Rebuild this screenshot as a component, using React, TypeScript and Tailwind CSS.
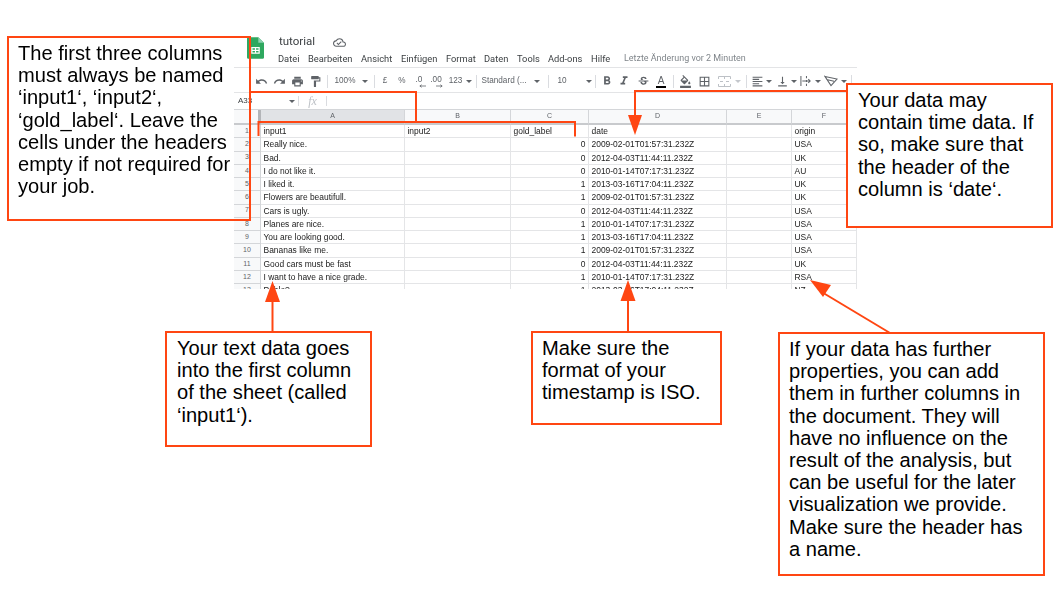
import {
  MdUndo,
  MdRedo,
  MdPrint,
  MdFormatPaint,
  MdFormatBold,
  MdFormatItalic,
  MdStrikethroughS,
  MdFormatColorFill,
  MdBorderAll,
  MdFormatAlignLeft,
  MdVerticalAlignBottom,
  MdOutlineCloudDone,
} from "react-icons/md";
import type { ReactNode } from "react";

const ORANGE = "#ff4612";

const rows = [
  ["Really nice.", "0", "2009-02-01T01:57:31.232Z", "USA"],
  ["Bad.", "0", "2012-04-03T11:44:11.232Z", "UK"],
  ["I do not like it.", "0", "2010-01-14T07:17:31.232Z", "AU"],
  ["I liked it.", "1", "2013-03-16T17:04:11.232Z", "UK"],
  ["Flowers are beautifull.", "1", "2009-02-01T01:57:31.232Z", "UK"],
  ["Cars is ugly.", "0", "2012-04-03T11:44:11.232Z", "USA"],
  ["Planes are nice.", "1", "2010-01-14T07:17:31.232Z", "USA"],
  ["You are looking good.", "1", "2013-03-16T17:04:11.232Z", "USA"],
  ["Bananas like me.", "1", "2009-02-01T01:57:31.232Z", "USA"],
  ["Good cars must be fast", "0", "2012-04-03T11:44:11.232Z", "UK"],
  ["I want to have a nice grade.", "1", "2010-01-14T07:17:31.232Z", "RSA"],
  ["Pablo?", "1", "2013-03-16T17:04:11.232Z", "NZ"],
];

const menu = [
  { label: "Datei", w: "w-[30px]" },
  { label: "Bearbeiten", w: "w-[53px]" },
  { label: "Ansicht", w: "w-[40px]" },
  { label: "Einfügen", w: "w-[45px]" },
  { label: "Format", w: "w-[38px]" },
  { label: "Daten", w: "w-[33px]" },
  { label: "Tools", w: "w-[31px]" },
  { label: "Add-ons", w: "w-[43px]" },
  { label: "Hilfe", w: "w-[33px]" },
];

const Caret = () => (
  <span className="inline-block h-0 w-0 border-x-[3px] border-t-[3px] border-x-transparent border-t-[#5f6368]" />
);

const Sep = () => <div className="mx-[3px] h-[13px] w-px shrink-0 bg-[#dadce0]" />;

const Tool = ({ w, children }: { w: string; children: ReactNode }) => (
  <div className={`flex shrink-0 items-center justify-center ${w}`}>{children}</div>
);

// ".0" / ".00" with the small arrow under the digits
const Decimal = ({ label, flip }: { label: string; flip?: boolean }) => (
  <div className="relative -mt-[2px] leading-[8px]">
    {label}
    <svg width="7" height="4" viewBox="0 0 8 4" className={`absolute top-[8px] ${flip ? "right-[-1px]" : "left-[3px] -scale-x-100"}`}>
      <path d="M0 2H7M5 0.500L7 2L5 3.500" fill="none" stroke="#5f6368" strokeWidth="0.9" />
    </svg>
  </div>
);

const MergeIcon = () => (
  <svg width="13" height="11" viewBox="0 0 13 11" fill="none" stroke="#bdc1c6" strokeWidth="1">
    <path d="M0.500 3V0.500H12.500V3M0.500 8V10.500H12.500V8M6.500 0.500V3M6.500 8V10.500" />
    <path d="M2 5.500H5M8 5.500H11" />
  </svg>
);

const WrapIcon = () => (
  <svg width="12" height="12" viewBox="0 0 13 12" fill="none" stroke="#5f6368" strokeWidth="1.100">
    <path d="M1 0.500V11.500M7 0.500V3M7 5V7M7 9V11.500M2.500 6H11M9 4L11 6L9 8" />
  </svg>
);

const RotateIcon = () => (
  <svg width="14" height="12" viewBox="0 0 14 12" fill="none" stroke="#5f6368" strokeWidth="1.100">
    <path d="M1 1.500L13 4L7 10.500Z M2.500 4.500L10 6.200M1 1L0.500 1.500" />
  </svg>
);

const Toolbar = () => (
  <div className="flex h-[24px] items-center pt-[2px] pl-[18px] text-[8.2px] text-[#5f6368]">
    <Tool w="w-[18px]"><MdUndo size={13} /></Tool>
    <Tool w="w-[18px]"><MdRedo size={13} /></Tool>
    <Tool w="w-[18px]"><MdPrint size={13} /></Tool>
    <Tool w="w-[18px]"><MdFormatPaint size={13} /></Tool>
    <Sep />
    <Tool w="w-[28px]">100%</Tool>
    <Tool w="w-[12px]"><Caret /></Tool>
    <Sep />
    <Tool w="w-[14px]">£</Tool>
    <Tool w="w-[20px]">%</Tool>
    <Tool w="w-[14px]"><Decimal label=".0" /></Tool>
    <Tool w="w-[20px]"><Decimal label=".00" flip /></Tool>
    <Tool w="w-[19px]">123</Tool>
    <Tool w="w-[8px]"><Caret /></Tool>
    <Sep />
    <Tool w="w-[48px]"><span className="whitespace-nowrap">Standard (...</span></Tool>
    <Tool w="w-[17px]"><Caret /></Tool>
    <Sep />
    <Tool w="w-[20px]">10</Tool>
    <div className="flex w-[20px] shrink-0 justify-end"><Caret /></div>
    <Sep />
    <Tool w="w-[15px]"><MdFormatBold size={14} /></Tool>
    <Tool w="w-[20px]"><MdFormatItalic size={14} /></Tool>
    <Tool w="w-[18px]"><MdStrikethroughS size={13} /></Tool>
    <Tool w="w-[18px]">
      <span className="border-b-[2px] border-black px-[2px] text-[10px] leading-[11px]">A</span>
    </Tool>
    <Sep />
    <Tool w="w-[16px]"><MdFormatColorFill size={13} /></Tool>
    <Tool w="w-[22px]"><MdBorderAll size={13} /></Tool>
    <Tool w="w-[18px]"><MergeIcon /></Tool>
    <Tool w="w-[10px]"><span className="inline-block h-0 w-0 border-x-[3px] border-t-[3px] border-x-transparent border-t-[#c4c7cc]" /></Tool>
    <Sep />
    <Tool w="w-[14px]"><MdFormatAlignLeft size={13} /></Tool>
    <Tool w="w-[10px]"><Caret /></Tool>
    <Tool w="w-[16px]"><MdVerticalAlignBottom size={13} /></Tool>
    <Tool w="w-[8px]"><Caret /></Tool>
    <Tool w="w-[16px]"><WrapIcon /></Tool>
    <Tool w="w-[8px]"><Caret /></Tool>
    <Tool w="w-[18px]"><RotateIcon /></Tool>
    <Tool w="w-[8px]"><Caret /></Tool>
    <Sep />
  </div>
);

const colHead = "flex items-center justify-center border-r border-[#d4d6d9] text-[7px] text-[#5f6368]";
const cell = "truncate border-r border-b border-[#e4e5e7] px-[2.5px] leading-[13px]";

const RowHead = ({ n }: { n: number }) => (
  <div className="flex items-center justify-center border-r border-b border-[#d4d6d9] bg-[#f8f9fa] text-[7px] text-[#5f6368]">
    {n}
  </div>
);

const Row = ({ n, r }: { n: number; r: string[] }) => (
  <>
    <RowHead n={n} />
    <div className={cell}>{r[0]}</div>
    <div className={cell} />
    <div className={`${cell} text-right`}>{r[1]}</div>
    <div className={cell}>{r[2]}</div>
    <div className={cell} />
    <div className={cell}>{r[3]}</div>
  </>
);

const Sheet = () => (
  <div className="w-[623px] overflow-hidden font-['Liberation_Sans',sans-serif] blur-[0.3px]">
    {/* Title + menu */}
    <div className="flex h-[38px] border-b border-[#e3e4e6]">
      <svg width="17" height="22" viewBox="0 0 18 23" className="mt-[7px] ml-[13px] shrink-0">
        <path d="M1.5 0H12L18 6V21.5A1.5 1.5 0 0 1 16.5 23H1.5A1.5 1.5 0 0 1 0 21.5V1.5A1.5 1.5 0 0 1 1.5 0Z" fill="#2fa85f" />
        <path d="M12 0L18 6H12Z" fill="#8ed1b1" />
        <path d="M4.5 10.5H13.5V17.5H4.5Z M5.8 11.8V13.4H8.4V11.8Z M9.6 11.8V13.4H12.2V11.8Z M5.8 14.6V16.2H8.4V14.6Z M9.6 14.6V16.2H12.2V14.6Z" fill="#fff" fillRule="evenodd" />
      </svg>
      <div className="ml-[14px] font-['Roboto',sans-serif]">
        <div className="flex h-[22px] items-center pt-[2px] pl-[1px] text-[#3c4043]">
          <span className="text-[11.5px]">tutorial</span>
          <MdOutlineCloudDone size={13} className="ml-[18px] text-[#5f6368]" />
        </div>
        <div className="flex h-[14px] items-center text-[9.3px] whitespace-nowrap text-[#3c4043]">
          {menu.map((m) => (
            <span key={m.label} className={m.w}>{m.label}</span>
          ))}
          <span className="text-[8.95px] text-[#80868b]">Letzte Änderung vor 2 Minuten</span>
        </div>
      </div>
    </div>

    <Toolbar />

    {/* Formula bar */}
    <div className="flex h-[17px] items-center border-t border-[#e3e4e6] text-[8px] text-[#3c4043]">
      <span className="w-[55px] pl-[4px]">A33</span>
      <Caret />
      <div className="ml-[3px] h-[10px] w-px bg-[#dadce0]" />
      <span className="w-[27px] text-center font-['Liberation_Serif',serif] text-[12px] text-[#bdc1c6] italic">fx</span>
      <div className="h-[10px] w-px bg-[#dadce0]" />
    </div>

    {/* Grid */}
    <div className="grid h-[180px] grid-cols-[27px_144px_106px_78px_138px_65px_65px] grid-rows-[15px] auto-rows-[13.28px] border-t border-[#d4d6d9] text-[8.45px] whitespace-nowrap text-[#222]">
      <div className="border-r-[3px] border-b-[2px] border-r-[#b3b5b8] border-b-[#c8cacd] bg-[#f8f9fa]" />
      <div className={`${colHead} border-b-[2px] border-b-[#c8cacd] bg-[#e1e3e6]`}>A</div>
      {["B", "C", "D", "E", "F"].map((c) => (
        <div key={c} className={`${colHead} border-b-[2px] border-b-[#c8cacd] bg-[#f8f9fa]`}>{c}</div>
      ))}
      <RowHead n={1} />
      <div className={cell}>input1</div>
      <div className={cell}>input2</div>
      <div className={cell}>gold_label</div>
      <div className={cell}>date</div>
      <div className={cell} />
      <div className={cell}>origin</div>
      {rows.map((r, i) => (
        <Row key={i} n={i + 2} r={r} />
      ))}
    </div>
  </div>
);

const Note = ({ className, children }: { className: string; children: ReactNode }) => (
  <div
    className={`absolute border-2 border-[#ff4612] pt-[4px] font-['Liberation_Sans',sans-serif] text-[20.1px] leading-[22.2px] whitespace-nowrap text-black ${className}`}
  >
    {children}
  </div>
);

// arrows and brackets that tie the notes to the sheet
const Connectors = () => (
  <svg width="1058" height="595" className="pointer-events-none absolute top-0 left-0">
    <g fill="none" stroke={ORANGE} strokeWidth="2">
      <path d="M250 92H416V122" />
      <path d="M258.500 136V122H575V136.500" />
      <path d="M847 91H635V116" />
      <path d="M272.500 300V332" />
      <path d="M628 300V332" />
      <path d="M820 291L890 333" />
    </g>
    <g fill={ORANGE}>
      <path d="M628 115H642L635 135Z" />
      <path d="M265 302H280L272.500 281Z" />
      <path d="M620.500 301H635.500L628 280Z" />
      <path d="M810 280L831 285L823 297Z" />
    </g>
  </svg>
);

const App = () => {
  return (
    <div className="relative h-[595px] w-[1058px] overflow-hidden bg-white">
      <div className="pt-[30px] pl-[234px]">
        <Sheet />
      </div>
      <Connectors />
      {/* this one lies over the sheet without hiding it */}
      <Note className="top-[36px] left-[7px] h-[185px] w-[244px] pl-[9px]">
        The first three columns
        <br />must always be named
        <br />‘input1‘, ‘input2‘,
        <br />‘gold_label‘. Leave the
        <br />cells under the headers
        <br />empty if not required for
        <br />your job.
      </Note>
      <Note className="top-[83px] left-[846px] h-[145px] w-[207px] bg-white pl-[10px]">
        Your data may
        <br />contain time data. If
        <br />so, make sure that
        <br />the header of the
        <br />column is ‘date‘.
      </Note>
      <Note className="top-[331px] left-[165px] h-[116px] w-[207px] bg-white pl-[10px]">
        Your text data goes
        <br />into the first column
        <br />of the sheet (called
        <br />‘input1‘).
      </Note>
      <Note className="top-[331px] left-[531px] h-[94px] w-[191px] bg-white pl-[9px]">
        Make sure the
        <br />format of your
        <br />timestamp is ISO.
      </Note>
      <Note className="top-[332px] left-[778px] h-[244px] w-[267px] bg-white pl-[9px]">
        If your data has further
        <br />properties, you can add
        <br />them in further columns in
        <br />the document. They will
        <br />have no influence on the
        <br />result of the analysis, but
        <br />can be useful for the later
        <br />visualization we provide.
        <br />Make sure the header has
        <br />a name.
      </Note>
    </div>
  );
};

export default App;
